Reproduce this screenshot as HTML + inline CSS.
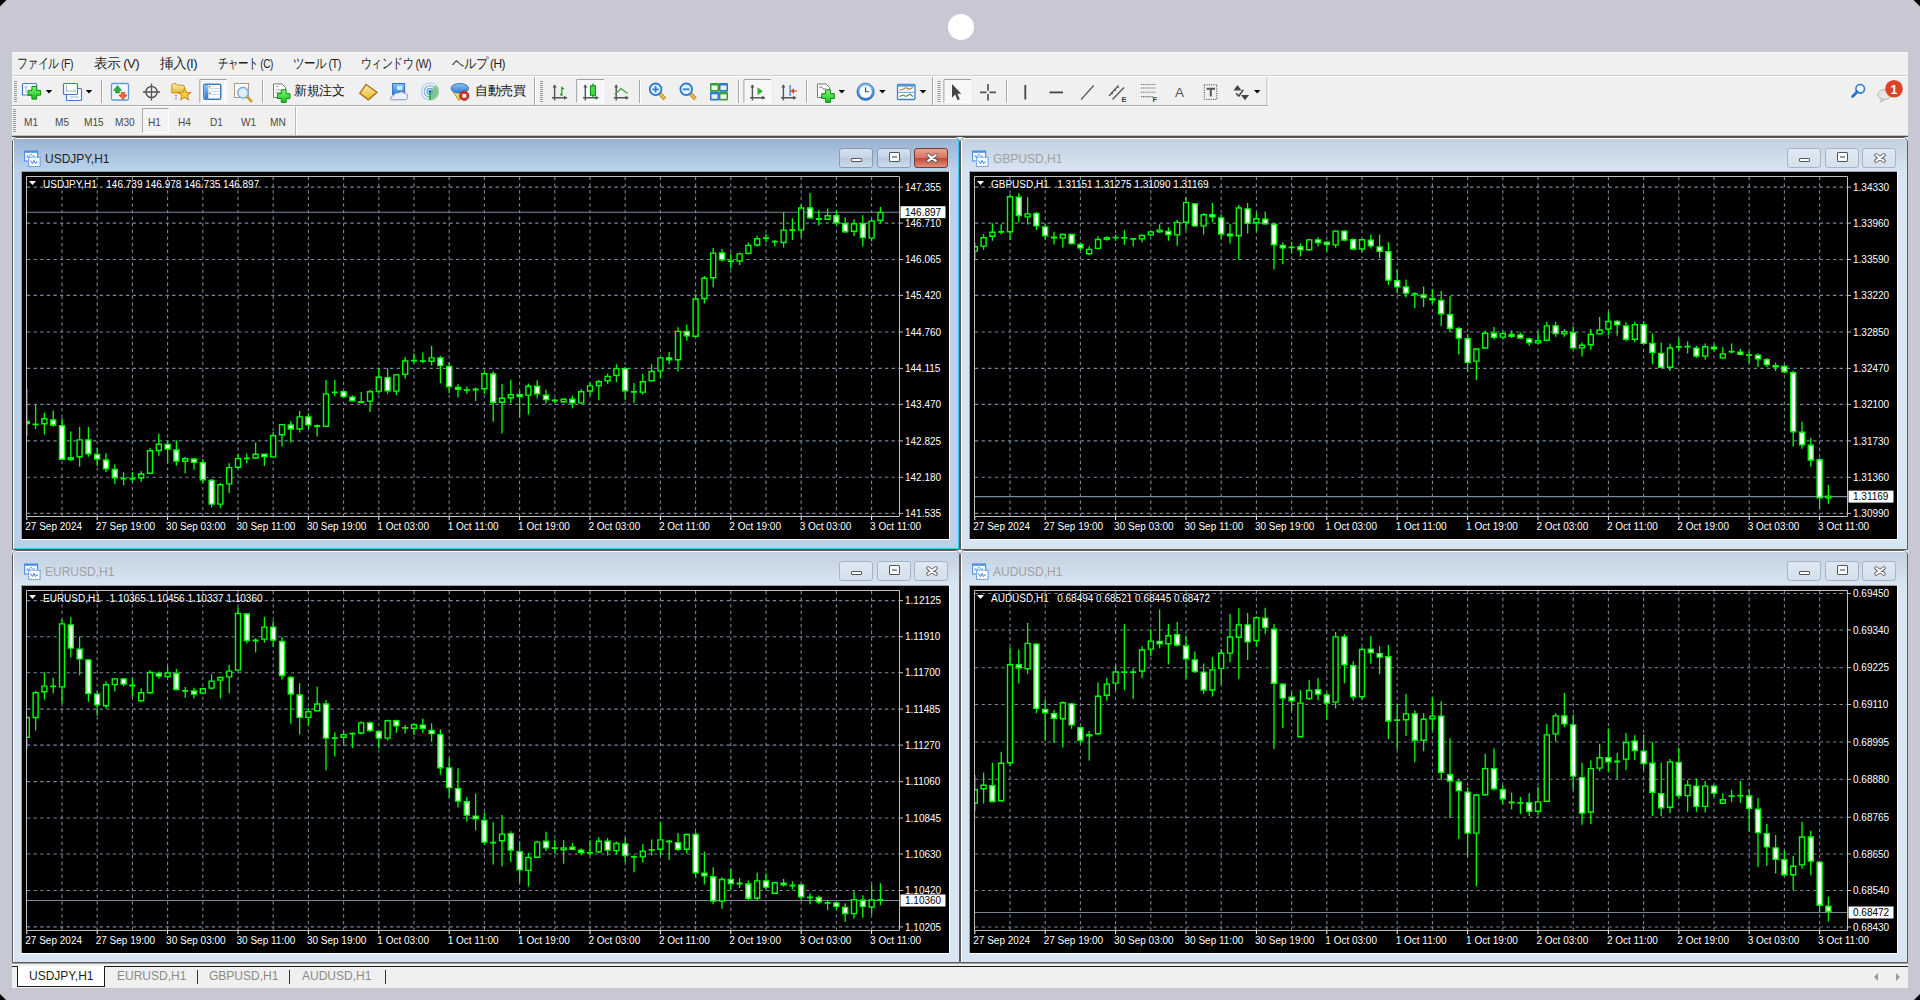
<!DOCTYPE html><html><head><meta charset="utf-8"><style>
*{margin:0;padding:0;box-sizing:border-box}
html,body{width:1920px;height:1000px;overflow:hidden;background:#c8c8d4;font-family:"Liberation Sans",sans-serif}
.a{position:absolute}
.menu span{position:absolute;top:3px;font-size:13.5px;color:#1e1e1e;white-space:nowrap;letter-spacing:-0.6px}
.tf span{position:absolute;font-size:11px;color:#4a4a4a;top:10px;white-space:nowrap;transform:scaleX(0.92);transform-origin:0 0}
svg text{font-family:"Liberation Sans",sans-serif}
.tab{position:absolute;top:0;font-size:12px;color:#8a8a8a;white-space:nowrap}
</style></head><body>
<svg class="a" style="left:0;top:0" width="1920" height="1000">
<polygon points="0,0 6.5,0 0,6.5" fill="#000"/><polygon points="1920,0 1913.5,0 1920,6.5" fill="#000"/>
<polygon points="0,1000 6,1000 0,994" fill="#000"/><polygon points="1920,1000 1914,1000 1920,994" fill="#000"/>
<circle cx="961" cy="27" r="13" fill="#fff"/>
</svg>

<div class="a" style="left:12px;top:52px;width:1896px;height:936px;background:#f0f0f0;overflow:hidden">
<div class="menu">
<span style="left:5px;transform:scaleX(0.7753);transform-origin:0 0">ファイル (F)</span>
<span style="left:82px;transform:scaleX(0.9746);transform-origin:0 0">表示 (V)</span>
<span style="left:148px;transform:scaleX(0.979);transform-origin:0 0">挿入(I)</span>
<span style="left:206px;transform:scaleX(0.7462);transform-origin:0 0">チャート (C)</span>
<span style="left:281px;transform:scaleX(0.8172);transform-origin:0 0">ツール (T)</span>
<span style="left:349px;transform:scaleX(0.7765);transform-origin:0 0">ウィンドウ (W)</span>
<span style="left:440px;transform:scaleX(0.8794);transform-origin:0 0">ヘルプ (H)</span>
</div>
<div class="a" style="left:0px;top:0px;width:1896px;height:1px;background:#f8f8f8"></div>
<div class="a" style="left:0px;top:23px;width:1896px;height:1px;background:#d0d0d0"></div>
<div class="a" style="left:0px;top:24px;width:1896px;height:1px;background:#ffffff"></div>
<div class="a" style="left:0px;top:53px;width:1256px;height:1px;background:#a8a8a8"></div>
<div class="a" style="left:0px;top:54px;width:1256px;height:1px;background:#ffffff"></div>
<div class="a" style="left:0px;top:83px;width:1896px;height:1px;background:#c0c0c0"></div>
<div class="a" style="left:0px;top:84px;width:1896px;height:1px;background:#4a4a4a"></div>
<div class="a" style="left:130px;top:56px;width:27px;height:25px;border:1px solid #a8a8a8;border-right-color:#fff;border-bottom-color:#fff;background:#f4f4f4"></div>
<div class="tf" style="position:absolute;left:0;top:54px">
<span style="left:12px">M1</span>
<span style="left:43px">M5</span>
<span style="left:72px">M15</span>
<span style="left:103px">M30</span>
<span style="left:136px">H1</span>
<span style="left:166px">H4</span>
<span style="left:198px">D1</span>
<span style="left:229px">W1</span>
<span style="left:258px">MN</span>
</div>
<div class="a" style="left:283px;top:55px;width:1px;height:28px;background:#b8b8b8"></div>
<div class="a" style="left:284px;top:55px;width:1px;height:28px;background:#ffffff"></div>
<svg class="a" style="left:0;top:0" width="1896" height="84"><defs><linearGradient id="gplus" x1="0" y1="0" x2="0" y2="1"><stop offset="0" stop-color="#7cf87c"/><stop offset="1" stop-color="#18c018"/></linearGradient><linearGradient id="gold" x1="0" y1="0" x2="0" y2="1"><stop offset="0" stop-color="#fdf0a8"/><stop offset="1" stop-color="#e4b830"/></linearGradient><linearGradient id="blu" x1="0" y1="0" x2="0" y2="1"><stop offset="0" stop-color="#8cc8f4"/><stop offset="1" stop-color="#2a78d0"/></linearGradient></defs><g transform="translate(-12,-52)"><rect x="14" y="81" width="3" height="1" fill="#9a9a9a"/><rect x="14" y="83" width="3" height="1" fill="#9a9a9a"/><rect x="14" y="85" width="3" height="1" fill="#9a9a9a"/><rect x="14" y="87" width="3" height="1" fill="#9a9a9a"/><rect x="14" y="89" width="3" height="1" fill="#9a9a9a"/><rect x="14" y="91" width="3" height="1" fill="#9a9a9a"/><rect x="14" y="93" width="3" height="1" fill="#9a9a9a"/><rect x="14" y="95" width="3" height="1" fill="#9a9a9a"/><rect x="14" y="97" width="3" height="1" fill="#9a9a9a"/><rect x="14" y="99" width="3" height="1" fill="#9a9a9a"/><rect x="14" y="101" width="3" height="1" fill="#9a9a9a"/><rect x="22.5" y="83.5" width="14" height="11.5" rx="1" fill="#fff" stroke="#3b7dc8" stroke-width="1.2"/><path d="M26 86v7M24.5 87.5l1.5-1.5 1.5 1.5" stroke="#9ab8d8" fill="none"/><polygon points="31.9,86.5 36.7,86.5 36.7,90.4 40.6,90.4 40.6,95.2 36.7,95.2 36.7,99.1 31.9,99.1 31.9,95.2 28.0,95.2 28.0,90.4 31.9,90.4" fill="url(#gplus)" stroke="#0e8a0e" stroke-width="1"/><polygon points="45.8,89.95 52.2,89.95 49,93.55" fill="#000"/><rect x="66.5" y="88.5" width="15" height="12" rx="1" fill="#fff" stroke="#3b7dc8" stroke-width="1.2"/><path d="M70 97h9" stroke="#9ab8d8"/><rect x="63.5" y="83.5" width="14" height="11" rx="1" fill="#fff" stroke="#3b7dc8" stroke-width="1.2"/><path d="M66.5 85.5v6.5M66.5 91h9M74 89.5l1.5 1.5-1.5 1.5" stroke="#9ab8d8" fill="none"/><polygon points="85.8,89.95 92.2,89.95 89,93.55" fill="#000"/><rect x="101" y="80" width="1" height="23" fill="#a8a8a8"/><rect x="102" y="80" width="1" height="23" fill="#fff"/><rect x="111.5" y="83.5" width="17" height="16.5" rx="1.5" fill="#f6f9fd" stroke="#5b9bd8" stroke-width="1.3"/><path d="M113 88h13M113 92h13M113 96h13" stroke="#e4ecf4"/><polygon points="113.5,90.5 117.5,85.5 121.5,90.5 119.3,90.5 119.3,93 115.7,93 115.7,90.5" fill="#2cae3c" stroke="#1a7a28" stroke-width=".6"/><polygon points="119,95 121.2,95 121.2,92.5 124.8,92.5 124.8,95 127,95 123,99.5" fill="#f06a30" stroke="#c02a10" stroke-width=".6"/><circle cx="151.5" cy="92" r="5.6" fill="none" stroke="#555" stroke-width="1.5"/><path d="M143 92H160M151.5 83.5V100.5" stroke="#555" stroke-width="1.3"/><path d="M171.8 85.5q0-1.8 1.8-1.8h2.5l1.5 1.5h5q1.8 0 1.8 1.8V93H171.8z" fill="url(#gold)" stroke="#c8901c" stroke-width="1"/><path d="M176 95v5" stroke="#333" stroke-dasharray="1 1.2"/><polygon points="184.6,88.3 186.4,92.3 190.6,92.6 187.4,95.3 188.4,99.6 184.6,97.3 180.8,99.6 181.8,95.3 178.6,92.6 182.8,92.3" fill="#f4d040" stroke="#d08a20" stroke-width="1.1"/><rect x="199.3" y="79" width="27.19999999999999" height="23.700000000000003" fill="#f7f7f7"/><path d="M199.8 102.7 V79.5 H226.5" stroke="#a0a0a0" fill="none"/><path d="M200.3 102.2 H226.0 V80" stroke="#fff" fill="none"/><rect x="203.8" y="84.3" width="17" height="15" rx="1.5" fill="#fff" stroke="#3a7cc8" stroke-width="1.5"/><rect x="204.5" y="85" width="3.8" height="13.6" fill="url(#blu)"/><path d="M209.5 88.5H220M209.5 91.5H220M209.5 94.5H220" stroke="#c8dcf0"/><circle cx="209.7" cy="86.8" r=".8" fill="#d03020"/><circle cx="209.7" cy="93.3" r=".8" fill="#d03020"/><rect x="234.5" y="83.5" width="14" height="14" fill="#fff" stroke="#b09880"/><circle cx="243" cy="92.7" r="5.3" fill="#d8ecf8" fill-opacity=".85" stroke="#78b0e0" stroke-width="1.6"/><path d="M247 96.8l5 5" stroke="#d8962c" stroke-width="2.6"/><rect x="262" y="80" width="1" height="23" fill="#a8a8a8"/><rect x="263" y="80" width="1" height="23" fill="#fff"/><path d="M273.5 84H282L285.5 87.5V97.5H273.5Z" fill="#fff" stroke="#777"/><path d="M275.5 86.5h3M275.5 90h7M275.5 92.5h6" stroke="#aaa"/><polygon points="281.3,89.8 286.1,89.8 286.1,93.7 290.0,93.7 290.0,98.5 286.1,98.5 286.1,102.4 281.3,102.4 281.3,98.5 277.4,98.5 277.4,93.7 281.3,93.7" fill="url(#gplus)" stroke="#0e8a0e" stroke-width="1"/><polygon points="359.8,93.4 366,84.4 377,92.2 368.4,99.8" fill="url(#gold)" stroke="#b07020" stroke-width="1.4"/><rect x="392.6" y="83.5" width="12" height="11" fill="url(#blu)" stroke="#2a70c0"/><rect x="397" y="86" width="5.5" height="4" fill="#c8ecff"/><path d="M391 99.8q-1.5-3.5 2.5-4 1-3.5 5-2.8 2.5-2.5 5.5 0 4 0 3.3 3.6 1 2.5-1.3 3.2z" fill="#eef2f8" stroke="#8898b0"/><circle cx="430" cy="91.4" r="8.6" fill="#f4f8fc" stroke="#b4cce4" stroke-width="1.2"/><circle cx="430" cy="91.4" r="5.8" fill="none" stroke="#8cb4dc" stroke-width="1.4"/><circle cx="430" cy="91.4" r="3" fill="none" stroke="#6aa0d8" stroke-width="1.2"/><path d="M430 91.4V100A8.6 8.6 0 0 0 438.6 91.4 8.6 8.6 0 0 0 436 85.3Z" fill="#6cc070" fill-opacity=".75"/><path d="M430 91.4V100" stroke="#20a030" stroke-width="1.5"/><circle cx="430" cy="91.4" r="1.6" fill="#2a70c0"/><polygon points="452,90.5 467,90.5 459,100.5" fill="url(#gold)" stroke="#c09030"/><ellipse cx="459.8" cy="88.3" rx="8.8" ry="4.8" fill="url(#blu)" stroke="#3a78c0"/><circle cx="464.3" cy="95.8" r="4.6" fill="#d83020" stroke="#a82010" stroke-width=".8"/><rect x="462.4" y="93.9" width="3.8" height="3.8" fill="#fff"/><rect x="534" y="77" width="1" height="28" fill="#a8a8a8"/><rect x="535" y="77" width="1" height="28" fill="#fff"/><rect x="540" y="81" width="3" height="1" fill="#9a9a9a"/><rect x="540" y="83" width="3" height="1" fill="#9a9a9a"/><rect x="540" y="85" width="3" height="1" fill="#9a9a9a"/><rect x="540" y="87" width="3" height="1" fill="#9a9a9a"/><rect x="540" y="89" width="3" height="1" fill="#9a9a9a"/><rect x="540" y="91" width="3" height="1" fill="#9a9a9a"/><rect x="540" y="93" width="3" height="1" fill="#9a9a9a"/><rect x="540" y="95" width="3" height="1" fill="#9a9a9a"/><rect x="540" y="97" width="3" height="1" fill="#9a9a9a"/><rect x="540" y="99" width="3" height="1" fill="#9a9a9a"/><rect x="540" y="101" width="3" height="1" fill="#9a9a9a"/><path d="M554.6 85.5V100.5M552 97.7H566.5" stroke="#555" stroke-width="1.4" fill="none"/><polygon points="552.6,87.5 554.6,84.3 556.6,87.5" fill="#555"/><polygon points="564.0,95.7 567.5,97.7 564.0,99.7" fill="#555"/><path d="M561.8 86.5V96M561.8 88.5H564M561.8 94.5H560" stroke="#20a020" stroke-width="1.3" fill="none"/><rect x="576.2" y="79" width="27.799999999999955" height="23.700000000000003" fill="#f7f7f7"/><path d="M576.7 102.7 V79.5 H604" stroke="#a0a0a0" fill="none"/><path d="M577.2 102.2 H603.5 V80" stroke="#fff" fill="none"/><path d="M585.3 85.5V100.5M583 97.7H598" stroke="#555" stroke-width="1.4" fill="none"/><polygon points="583.3,87.5 585.3,84.3 587.3,87.5" fill="#555"/><polygon points="595.5,95.7 599,97.7 595.5,99.7" fill="#555"/><path d="M593 83.5V98" stroke="#108010" stroke-width="1.2"/><rect x="590.5" y="85.8" width="5" height="9.5" fill="#44dd44" stroke="#108a10"/><path d="M616.2 85.5V100.5M613.8 97.7H628" stroke="#555" stroke-width="1.4" fill="none"/><polygon points="614.2,87.5 616.2,84.3 618.2,87.5" fill="#555"/><polygon points="625.5,95.7 629,97.7 625.5,99.7" fill="#555"/><polyline points="615,94.5 621,88.5 627.5,93.5" fill="none" stroke="#40a040" stroke-width="1.3"/><rect x="639" y="80" width="1" height="23" fill="#a8a8a8"/><rect x="640" y="80" width="1" height="23" fill="#fff"/><path d="M659.8000000000001 93.5l5 5.5" stroke="#a8781c" stroke-width="3.6"/><path d="M659.8000000000001 93.5l5 5.5" stroke="#f0c040" stroke-width="2"/><circle cx="655.6" cy="89.3" r="5.8" fill="#dff4fd" stroke="#2a78d0" stroke-width="1.8"/><path d="M652.3000000000001 89.3H658.9M655.6 86V92.6" stroke="#3a80c8" stroke-width="1.8"/><path d="M690.4000000000001 93.5l5 5.5" stroke="#a8781c" stroke-width="3.6"/><path d="M690.4000000000001 93.5l5 5.5" stroke="#f0c040" stroke-width="2"/><circle cx="686.2" cy="89.3" r="5.8" fill="#dff4fd" stroke="#2a78d0" stroke-width="1.8"/><path d="M682.9000000000001 89.3H689.5" stroke="#3a80c8" stroke-width="1.8"/><rect x="710" y="83" width="9" height="8.8" rx="1" fill="#38a038"/><rect x="719" y="83" width="9" height="8.8" rx="1" fill="#2c78d0"/><rect x="710" y="91.8" width="9" height="8.8" rx="1" fill="#2c78d0"/><rect x="719" y="91.8" width="9" height="8.8" rx="1" fill="#38a038"/><rect x="711.5" y="85.5" width="6" height="4.5" fill="#f4f8e8"/><rect x="720.5" y="85.5" width="6" height="4.5" fill="#e8f0fc"/><rect x="711.5" y="94.3" width="6" height="4.5" fill="#e8f0fc"/><rect x="720.5" y="94.3" width="6" height="4.5" fill="#f4f8e8"/><rect x="738" y="80" width="1" height="23" fill="#a8a8a8"/><rect x="739" y="80" width="1" height="23" fill="#fff"/><rect x="743.4" y="79" width="27.5" height="23.700000000000003" fill="#f7f7f7"/><path d="M743.9 102.7 V79.5 H770.9" stroke="#a0a0a0" fill="none"/><path d="M744.4 102.2 H770.4 V80" stroke="#fff" fill="none"/><path d="M752.4 85.5V100.5M750 97.7H764.5" stroke="#555" stroke-width="1.4" fill="none"/><polygon points="750.4,87.5 752.4,84.3 754.4,87.5" fill="#555"/><polygon points="762.0,95.7 765.5,97.7 762.0,99.7" fill="#555"/><polygon points="757.5,87.3 762.8,91.2 757.5,95.2" fill="#30b030"/><path d="M783.4 85.5V100.5M781 97.7H795.5" stroke="#555" stroke-width="1.4" fill="none"/><polygon points="781.4,87.5 783.4,84.3 785.4,87.5" fill="#555"/><polygon points="793.0,95.7 796.5,97.7 793.0,99.7" fill="#555"/><path d="M790.2 85V96" stroke="#6a9ac8" stroke-width="1.8"/><polygon points="790.5,91 794,88.3 794,93.7" fill="#d83818"/><path d="M793.5 91H797" stroke="#e06020" stroke-width="1.4"/><rect x="806" y="80" width="1" height="23" fill="#a8a8a8"/><rect x="807" y="80" width="1" height="23" fill="#fff"/><path d="M817.5 84H826L829.5 87.5V97.5H817.5Z" fill="#fff" stroke="#777"/><path d="M819.5 88q1-3 3 0t3 0" stroke="#666" fill="none"/><polygon points="825.6,89.8 830.4,89.8 830.4,93.7 834.3,93.7 834.3,98.5 830.4,98.5 830.4,102.4 825.6,102.4 825.6,98.5 821.7,98.5 821.7,93.7 825.6,93.7" fill="url(#gplus)" stroke="#0e8a0e" stroke-width="1"/><polygon points="838.5999999999999,89.95 845.0,89.95 841.8,93.55" fill="#000"/><circle cx="865.6" cy="91.75" r="8.6" fill="url(#blu)" stroke="#1a5aa8" stroke-width=".8"/><circle cx="865.6" cy="91.75" r="6.2" fill="#fafcfe"/><path d="M865.6 87.3V91.75H869" stroke="#555" stroke-width="1.2" fill="none"/><polygon points="879.1999999999999,89.95 885.6,89.95 882.4,93.55" fill="#000"/><rect x="897.5" y="84.5" width="17.5" height="15" rx="1" fill="#fff" stroke="#3a80d0" stroke-width="1.3"/><rect x="897.5" y="84.5" width="17.5" height="2.2" fill="#5a9ae0"/><path d="M898 92.3H915" stroke="#5a9ae0"/><polyline points="899.5,90.2 903,89.2 906,87.6 909,89.3 913,87.5" fill="none" stroke="#c87038" stroke-width="1.1"/><polyline points="899.5,96.5 903,95 906,96.5 910,94.2 913,96.5" fill="none" stroke="#30a040" stroke-width="1.1"/><polygon points="919.8,89.95 926.2,89.95 923,93.55" fill="#000"/><rect x="932" y="77" width="1" height="28" fill="#a8a8a8"/><rect x="933" y="77" width="1" height="28" fill="#fff"/><rect x="937.5" y="81" width="3" height="1" fill="#9a9a9a"/><rect x="937.5" y="83" width="3" height="1" fill="#9a9a9a"/><rect x="937.5" y="85" width="3" height="1" fill="#9a9a9a"/><rect x="937.5" y="87" width="3" height="1" fill="#9a9a9a"/><rect x="937.5" y="89" width="3" height="1" fill="#9a9a9a"/><rect x="937.5" y="91" width="3" height="1" fill="#9a9a9a"/><rect x="937.5" y="93" width="3" height="1" fill="#9a9a9a"/><rect x="937.5" y="95" width="3" height="1" fill="#9a9a9a"/><rect x="937.5" y="97" width="3" height="1" fill="#9a9a9a"/><rect x="937.5" y="99" width="3" height="1" fill="#9a9a9a"/><rect x="937.5" y="101" width="3" height="1" fill="#9a9a9a"/><rect x="943.4" y="79" width="27.5" height="23.700000000000003" fill="#f7f7f7"/><path d="M943.9 102.7 V79.5 H970.9" stroke="#a0a0a0" fill="none"/><path d="M944.4 102.2 H970.4 V80" stroke="#fff" fill="none"/><polygon points="952,84 952,97.7 955.2,94.6 957.6,100.2 959.8,99.2 957.4,93.7 961.3,93.7" fill="#444"/><path d="M980 92.4H986.6M989.4 92.4H996M988 84V90.8M988 94V100.5" stroke="#555" stroke-width="1.7"/><rect x="1006" y="80" width="1" height="23" fill="#a8a8a8"/><rect x="1007" y="80" width="1" height="23" fill="#fff"/><path d="M1025.3 85V99.5" stroke="#444" stroke-width="1.8"/><path d="M1049.5 92.4H1063" stroke="#444" stroke-width="1.8"/><path d="M1081 99.6L1093.7 85.5" stroke="#555" stroke-width="1.3"/><path d="M1109 96L1118.5 85.5M1112.5 99.5L1124 87.5" stroke="#555" stroke-width="1.3"/><path d="M1111 92l2 2M1114 89l2 2M1117 86l2 2" stroke="#555"/><text x="1121.5" y="101.6" font-size="7.5" font-weight="bold" fill="#444" font-family="Liberation Sans">E</text><path d="M1141 84.5H1156M1141 88H1156M1141 92.3H1156M1141 96.6H1153" stroke="#666" stroke-width="1.1" stroke-dasharray="1.2 .9"/><text x="1152.5" y="101.8" font-size="7.5" font-weight="bold" fill="#444" font-family="Liberation Sans">F</text><text x="1175" y="96.8" font-size="13.5" fill="#555" font-family="Liberation Sans">A</text><rect x="1204.3" y="84.8" width="12.5" height="14.6" fill="none" stroke="#333" stroke-dasharray="1 1.3"/><path d="M1206.6 88.7H1215M1210.8 88.7V96.6" stroke="#555" stroke-width="2"/><polygon points="1233.5,90.5 1237.5,85 1241.5,90.5" fill="#444"/><path d="M1236 93.2L1238.8 96L1243.3 89.8" stroke="#444" stroke-width="1.5" fill="none"/><polygon points="1241,95 1249,95 1245,100.2" fill="#444"/><polygon points="1254.0,89.95 1260.4,89.95 1257.2,93.55" fill="#000"/><rect x="1266.5" y="77" width="1" height="28" fill="#a8a8a8"/><rect x="1267.5" y="77" width="1" height="28" fill="#fff"/><circle cx="1860.2" cy="88.8" r="4.3" fill="#fff" stroke="#2a7ad0" stroke-width="1.6"/><path d="M1857.2 91.8L1852.6 96.4" stroke="#2a70c8" stroke-width="2.8" stroke-linecap="round"/><ellipse cx="1884.5" cy="94.5" rx="6.5" ry="5" fill="#e6e6e6" stroke="#b4b4b4"/><path d="M1882 99l-1.5 3 4-2.5" fill="#d8d8d8" stroke="#aaa" stroke-width=".8"/><circle cx="1894" cy="88.8" r="8.8" fill="#e04024"/><text x="1890.6" y="93.6" font-size="12.5" font-weight="bold" fill="#fff" font-family="Liberation Sans">1</text></g></svg><div class="a" style="left:282px;top:31px;font-size:12.5px;color:#111;letter-spacing:-0.4px;white-space:nowrap">新規注文</div><div class="a" style="left:463px;top:31px;font-size:12.5px;color:#111;letter-spacing:-0.4px;white-space:nowrap">自動売買</div>
<svg class="a" style="left:0;top:0" width="6" height="84"><rect x="1" y="57" width="3" height="1" fill="#9a9a9a"/><rect x="1" y="59" width="3" height="1" fill="#9a9a9a"/><rect x="1" y="61" width="3" height="1" fill="#9a9a9a"/><rect x="1" y="63" width="3" height="1" fill="#9a9a9a"/><rect x="1" y="65" width="3" height="1" fill="#9a9a9a"/><rect x="1" y="67" width="3" height="1" fill="#9a9a9a"/><rect x="1" y="69" width="3" height="1" fill="#9a9a9a"/><rect x="1" y="71" width="3" height="1" fill="#9a9a9a"/><rect x="1" y="73" width="3" height="1" fill="#9a9a9a"/><rect x="1" y="75" width="3" height="1" fill="#9a9a9a"/><rect x="1" y="77" width="3" height="1" fill="#9a9a9a"/><rect x="1" y="79" width="3" height="1" fill="#9a9a9a"/></svg>
</div>
<div class="a" style="left:12px;top:137px;width:948px;height:413px;background:#b9d1ea;border:1px solid #5c5c5c;border-radius:5px 5px 0 0;overflow:hidden">
<div class="a" style="left:0;top:0;width:946px;height:1px;background:#fff"></div>
<div class="a" style="left:0;top:1px;width:946px;height:33px;background:linear-gradient(#98b3d3,#bdd4ec)"></div>
<div class="a" style="left:945px;top:0;width:1px;height:413px;background:#3cc8f0"></div>
<div class="a" style="left:0;top:410px;width:948px;height:1px;background:#3cc8f0"></div>
<div class="a" style="left:0;top:1px;width:1px;height:413px;background:#fff"></div>
<svg class="a" style="left:11px;top:12px" width="17" height="17" viewBox="0 0 17 17"><rect x="0.6" y="1" width="13" height="10" fill="#fff" stroke="#4a8ee8" stroke-width="1.1"/><rect x="0.6" y="1" width="13" height="1.8" fill="#4a8ee8"/><path d="M3 8V5.5l2 1.5 2-3 2 2.5 2-1" stroke="#6aa4ec" fill="none" stroke-width="1"/><rect x="4.6" y="7.3" width="11.5" height="9.2" fill="#fff" stroke="#4a8ee8" stroke-width="1.1" stroke-dasharray="1.4 .5"/><path d="M6.5 10.5l2 3 1.5-3 1.5 3 1.2-1.8 1 1" stroke="#3a80e0" fill="none" stroke-width="1"/></svg>
<div class="a" style="left:32px;top:14px;font-size:12px;color:#1e1e1e;white-space:nowrap">USDJPY,H1</div>
<div class="a" style="left:826px;top:10px;width:34px;height:20px;border:1px solid #8c9bb0;border-radius:3px;background:linear-gradient(#d4e0ee,#c4d4e6 50%,#b8cade 51%,#d0dcea)">
<div class="a" style="left:11px;top:9px;width:11px;height:4px;background:#fff;border:1px solid #555;border-radius:1px"></div>
</div>
<div class="a" style="left:864px;top:10px;width:34px;height:20px;border:1px solid #8c9bb0;border-radius:3px;background:linear-gradient(#d4e0ee,#c4d4e6 50%,#b8cade 51%,#d0dcea)">
<div class="a" style="left:11px;top:3px;width:11px;height:10px;background:#fff;border:1px solid #555;border-radius:1px"><div class="a" style="left:2px;top:3px;width:5px;height:2px;background:#8ba0b8"></div></div>
</div>
<div class="a" style="left:901px;top:10px;width:34px;height:20px;border:1px solid #7a3a30;border-radius:3px;background:linear-gradient(#e8a498,#d87060 50%,#c04830 51%,#e09080)">
<svg class="a" style="left:10px;top:2px" width="14" height="14" viewBox="0 0 14 14"><path d="M3.2 4.2l7.6 5.6M10.8 4.2l-7.6 5.6" stroke="#555" stroke-width="3.9" stroke-linecap="round"/><path d="M3.2 4.2l7.6 5.6M10.8 4.2l-7.6 5.6" stroke="#fff" stroke-width="2.1" stroke-linecap="round"/></svg>
</div>
</div>
<svg class="a" style="left:21px;top:171px" width="929" height="369" viewBox="-1 -1 929 369"><rect x="-1" y="-1" width="929" height="369" fill="#fff"/><rect x="-1" y="-1" width="928" height="368" fill="#a0a0a0"/><rect x="0" y="0" width="927" height="367" fill="#000"/><path d="M5 15.1H877M5 51.1H877M5 87.5H877M5 123.4H877M5 160.0H877M5 196.4H877M5 232.4H877M5 268.9H877M5 305.3H877M5 341.4H877M40.0 5V344M75.2 5V344M110.4 5V344M145.6 5V344M180.8 5V344M216.0 5V344M251.2 5V344M286.4 5V344M321.6 5V344M356.8 5V344M392.0 5V344M427.2 5V344M462.4 5V344M497.6 5V344M532.8 5V344M568.0 5V344M603.2 5V344M638.4 5V344M673.6 5V344M708.8 5V344M744.0 5V344M779.2 5V344M814.4 5V344M849.6 5V344" stroke="#778899" stroke-width="1.1" stroke-dasharray="3.3 3.3" fill="none"/><path d="M4 40.19999999999999H877" stroke="#778899" stroke-width="1.1"/><svg x="4.5" y="4.5" width="872" height="339" viewBox="4.5 4.5 872 339" overflow="hidden"><path d="M4.8 216.7V264.0M13.6 232.5V257.2M22.4 240.7V262.5M31.2 238.5V254.7M40.0 246.3V288.0M48.8 259.5V288.7M57.6 255.0V294.7M66.4 255.0V284.7M75.2 275.7V294.0M84.0 281.2V300.0M92.8 292.5V312.0M101.6 300.3V313.2M110.4 300.3V309.7M119.2 299.2V309.7M128.0 276.0V302.2M136.8 261.7V283.8M145.6 268.5V291.0M154.4 268.5V293.7M163.2 285.0V301.2M172.0 286.5V297.7M180.8 287.2V311.0M189.6 307.0V335.3M198.4 311.0V336.2M207.2 291.2V320.9M216.0 281.8V296.9M224.8 281.5V291.5M233.6 270.5V286.7M242.4 281.8V293.9M251.2 259.7V285.8M260.0 252.0V274.6M268.8 248.9V270.5M277.6 239.0V260.6M286.4 241.2V256.6M295.2 252.5V264.6M304.0 208.0V254.8M312.8 208.0V224.2M321.6 218.8V226.0M330.4 223.2V229.6M339.2 220.1V230.9M348.0 217.8V239.9M356.8 197.0V221.8M365.6 196.2V221.8M374.4 202.0V223.2M383.2 184.9V206.5M392.0 181.3V191.2M400.8 180.4V191.2M409.6 174.1V193.4M418.4 184.0V211.0M427.2 190.3V220.9M436.0 211.9V225.4M444.8 214.6V221.8M453.6 215.5V229.0M462.4 199.3V221.8M471.2 199.3V249.7M480.0 211.9V261.4M488.8 207.8V230.8M497.6 219.1V245.2M506.4 211.4V242.5M515.2 208.3V226.3M524.0 217.8V231.7M532.8 226.4V230.9M541.6 226.4V230.9M550.4 223.7V236.3M559.2 217.0V231.8M568.0 210.2V223.7M576.8 208.0V228.2M585.6 201.5V212.0M594.4 192.2V210.2M603.2 194.9V228.2M612.0 211.1V230.9M620.8 202.1V222.8M629.6 192.2V209.3M638.4 185.0V206.6M647.2 180.0V192.2M656.0 155.3V199.4M664.8 152.6V168.8M673.6 122.0V165.2M682.4 104.0V131.4M691.2 76.1V115.2M700.0 76.9V89.5M708.8 81.4V96.7M717.6 80.5V93.1M726.4 70.6V82.3M735.2 63.8V74.6M744.0 62.0V70.2M752.8 67.9V74.6M761.6 40.0V75.6M770.4 46.3V67.9M779.2 31.9V65.6M788.0 21.1V46.8M796.8 38.2V53.5M805.6 36.4V48.1M814.4 38.2V53.5M823.2 45.4V60.7M832.0 47.2V64.3M840.8 43.2V74.6M849.6 46.8V69.2M858.4 35.0V51.2" stroke="#00ff00" stroke-width="1.3" fill="none"/><path d="M19.9 246.8H24.9V251.8H19.9ZM46.3 285.8H51.3V287.5H46.3ZM55.1 267.9H60.1V284.8H55.1ZM116.7 302.0H121.7V305.8H116.7ZM125.5 278.7H130.5V301.3H125.5ZM134.3 272.3H139.3V278.5H134.3ZM160.7 286.7H165.7V289.3H160.7ZM195.9 312.7H200.9V332.1H195.9ZM204.7 295.6H209.7V311.9H204.7ZM213.5 286.6H218.5V295.2H213.5ZM231.1 282.3H236.1V286.0H231.1ZM248.7 263.8H253.7V284.9H248.7ZM257.5 252.6H262.5V262.8H257.5ZM275.1 244.9H280.1V257.0H275.1ZM301.5 221.9H306.5V254.2H301.5ZM345.5 219.7H350.5V229.1H345.5ZM354.3 205.2H359.3V219.1H354.3ZM371.9 202.9H376.9V219.1H371.9ZM380.7 189.0H385.7V202.4H380.7ZM407.1 185.9H412.1V189.3H407.1ZM459.9 201.8H464.9V216.8H459.9ZM477.5 226.3H482.5V230.3H477.5ZM486.3 222.7H491.3V225.8H486.3ZM503.9 214.2H508.9V223.1H503.9ZM539.1 227.2H544.1V229.8H539.1ZM556.7 219.7H561.7V230.9H556.7ZM565.5 213.9H570.5V219.0H565.5ZM574.3 209.8H579.3V213.6H574.3ZM583.1 204.4H588.1V208.8H583.1ZM591.9 196.6H596.9V203.4H591.9ZM618.3 209.8H623.3V220.1H618.3ZM627.1 199.5H632.1V208.8H627.1ZM635.9 185.9H640.9V198.9H635.9ZM653.5 159.4H658.5V187.7H653.5ZM671.1 127.0H676.1V164.3H671.1ZM679.9 106.3H684.9V126.5H679.9ZM688.7 81.1H693.7V105.7H688.7ZM715.1 81.9H720.1V89.0H715.1ZM723.9 73.4H728.9V81.3H723.9ZM732.7 66.8H737.7V73.0H732.7ZM759.1 58.1H764.1V70.5H759.1ZM776.7 36.0H781.7V57.9H776.7ZM803.1 43.7H808.1V47.2H803.1ZM829.5 51.7H834.5V59.3H829.5ZM847.1 49.1H852.1V66.1H847.1ZM855.9 40.5H860.9V48.5H855.9Z" stroke="#00ff00" stroke-width="1.4" fill="#000"/><path d="M2.3 249.5H7.3V251.5H2.3ZM28.7 248.0H33.7V253.0H28.7ZM37.5 253.7H42.5V287.2H37.5ZM63.9 267.9H68.9V281.8H63.9ZM72.7 282.5H77.7V287.0H72.7ZM81.5 288.0H86.5V296.8H81.5ZM90.3 297.5H95.3V305.8H90.3ZM143.1 272.4H148.1V277.0H143.1ZM151.9 278.0H156.9V289.0H151.9ZM169.5 287.0H174.5V290.2H169.5ZM178.3 290.8H183.3V307.8H178.3ZM187.1 308.4H192.1V332.1H187.1ZM239.9 282.3H244.9V284.6H239.9ZM266.3 253.0H271.3V257.0H266.3ZM283.9 244.9H288.9V252.9H283.9ZM319.1 219.7H324.1V224.5H319.1ZM327.9 225.1H332.9V228.8H327.9ZM363.1 205.7H368.1V218.8H363.1ZM415.9 185.9H420.9V193.6H415.9ZM424.7 194.4H429.7V214.5H424.7ZM433.5 215.5H438.5V217.3H433.5ZM468.7 202.0H473.7V230.3H468.7ZM495.1 222.7H500.1V224.5H495.1ZM512.7 214.2H517.7V221.8H512.7ZM521.5 223.2H526.5V227.6H521.5ZM547.9 227.2H552.9V230.9H547.9ZM600.7 196.6H605.7V218.7H600.7ZM644.7 185.9H649.7V187.7H644.7ZM662.3 159.4H667.3V163.8H662.3ZM697.5 81.0H702.5V87.7H697.5ZM785.5 36.0H790.5V45.8H785.5ZM811.9 43.7H816.9V50.7H811.9ZM820.7 51.7H825.7V59.7H820.7ZM838.3 51.7H843.3V65.6H838.3Z" stroke="#00ff00" stroke-width="1.4" fill="#fff"/><path d="M10.6 252.4H16.6M98.6 306.7H104.6M107.4 306.6H113.4M221.8 286.4H227.8M292.2 254.0H298.2M309.8 220.3H315.8M336.2 230.0H342.2M389.0 188.7H395.0M397.8 189.2H403.8M441.8 218.2H447.8M450.6 217.5H456.6M529.8 228.5H535.8M609.0 219.9H615.0M705.8 89.1H711.8M741.0 66.1H747.0M749.8 69.7H755.8M767.4 58.2H773.4M793.8 47.0H799.8" stroke="#00ff00" stroke-width="1.8" fill="none"/></svg><path d="M4.5 344.5V4.5H877.5V344.5Z" stroke="#c0c0c0" stroke-width="1" fill="none"/><path d="M878 15.1H881" stroke="#c0c0c0"/><text x="883" y="18.7" font-size="10" fill="#fff">147.355</text><path d="M878 51.1H881" stroke="#c0c0c0"/><text x="883" y="54.7" font-size="10" fill="#fff">146.710</text><path d="M878 87.5H881" stroke="#c0c0c0"/><text x="883" y="91.1" font-size="10" fill="#fff">146.065</text><path d="M878 123.4H881" stroke="#c0c0c0"/><text x="883" y="127.0" font-size="10" fill="#fff">145.420</text><path d="M878 160.0H881" stroke="#c0c0c0"/><text x="883" y="163.6" font-size="10" fill="#fff">144.760</text><path d="M878 196.4H881" stroke="#c0c0c0"/><text x="883" y="200.0" font-size="10" fill="#fff">144.115</text><path d="M878 232.4H881" stroke="#c0c0c0"/><text x="883" y="236.0" font-size="10" fill="#fff">143.470</text><path d="M878 268.9H881" stroke="#c0c0c0"/><text x="883" y="272.5" font-size="10" fill="#fff">142.825</text><path d="M878 305.3H881" stroke="#c0c0c0"/><text x="883" y="308.9" font-size="10" fill="#fff">142.180</text><path d="M878 341.4H881" stroke="#c0c0c0"/><text x="883" y="345.0" font-size="10" fill="#fff">141.535</text><rect x="878.5" y="34.19999999999999" width="45" height="12" fill="#fff"/><text x="883" y="43.8" font-size="10" fill="#000">146.897</text><path d="M4.8 345V348" stroke="#fff"/><text x="3.3" y="357.5" font-size="10" fill="#fff">27 Sep 2024</text><path d="M75.2 345V348" stroke="#fff"/><text x="73.7" y="357.5" font-size="10" fill="#fff">27 Sep 19:00</text><path d="M145.6 345V348" stroke="#fff"/><text x="144.1" y="357.5" font-size="10" fill="#fff">30 Sep 03:00</text><path d="M216.0 345V348" stroke="#fff"/><text x="214.5" y="357.5" font-size="10" fill="#fff">30 Sep 11:00</text><path d="M286.4 345V348" stroke="#fff"/><text x="284.9" y="357.5" font-size="10" fill="#fff">30 Sep 19:00</text><path d="M356.8 345V348" stroke="#fff"/><text x="355.3" y="357.5" font-size="10" fill="#fff">1 Oct 03:00</text><path d="M427.2 345V348" stroke="#fff"/><text x="425.7" y="357.5" font-size="10" fill="#fff">1 Oct 11:00</text><path d="M497.6 345V348" stroke="#fff"/><text x="496.1" y="357.5" font-size="10" fill="#fff">1 Oct 19:00</text><path d="M568.0 345V348" stroke="#fff"/><text x="566.5" y="357.5" font-size="10" fill="#fff">2 Oct 03:00</text><path d="M638.4 345V348" stroke="#fff"/><text x="636.9" y="357.5" font-size="10" fill="#fff">2 Oct 11:00</text><path d="M708.8 345V348" stroke="#fff"/><text x="707.3" y="357.5" font-size="10" fill="#fff">2 Oct 19:00</text><path d="M779.2 345V348" stroke="#fff"/><text x="777.7" y="357.5" font-size="10" fill="#fff">3 Oct 03:00</text><path d="M849.6 345V348" stroke="#fff"/><text x="848.1" y="357.5" font-size="10" fill="#fff">3 Oct 11:00</text><path d="M7 9h7l-3.5 4z" fill="#fff"/><text x="21" y="16" font-size="10" fill="#fff">USDJPY,H1</text><text x="84.3" y="16" font-size="10" fill="#fff">146.739 146.978 146.735 146.897</text></svg>
<div class="a" style="left:960px;top:137px;width:948px;height:413px;background:#d7e4f2;border:1px solid #5c5c5c;border-radius:5px 5px 0 0;overflow:hidden">
<div class="a" style="left:0;top:0;width:946px;height:1px;background:#fff"></div>
<div class="a" style="left:0;top:1px;width:946px;height:33px;background:linear-gradient(#c3d1e0,#d8e5f2)"></div>
<div class="a" style="left:0;top:1px;width:1px;height:413px;background:#fff"></div>
<svg class="a" style="left:11px;top:12px" width="17" height="17" viewBox="0 0 17 17"><rect x="0.6" y="1" width="13" height="10" fill="#fff" stroke="#4a8ee8" stroke-width="1.1"/><rect x="0.6" y="1" width="13" height="1.8" fill="#4a8ee8"/><path d="M3 8V5.5l2 1.5 2-3 2 2.5 2-1" stroke="#6aa4ec" fill="none" stroke-width="1"/><rect x="4.6" y="7.3" width="11.5" height="9.2" fill="#fff" stroke="#4a8ee8" stroke-width="1.1" stroke-dasharray="1.4 .5"/><path d="M6.5 10.5l2 3 1.5-3 1.5 3 1.2-1.8 1 1" stroke="#3a80e0" fill="none" stroke-width="1"/></svg>
<div class="a" style="left:32px;top:14px;font-size:12px;color:#a0a0a0;white-space:nowrap">GBPUSD,H1</div>
<div class="a" style="left:826px;top:10px;width:34px;height:20px;border:1px solid #a8b4c4;border-radius:3px;background:linear-gradient(#dfe8f2,#d4e0ec)">
<div class="a" style="left:11px;top:9px;width:11px;height:4px;background:#fff;border:1px solid #555;border-radius:1px"></div>
</div>
<div class="a" style="left:864px;top:10px;width:34px;height:20px;border:1px solid #a8b4c4;border-radius:3px;background:linear-gradient(#dfe8f2,#d4e0ec)">
<div class="a" style="left:11px;top:3px;width:11px;height:10px;background:#fff;border:1px solid #555;border-radius:1px"><div class="a" style="left:2px;top:3px;width:5px;height:2px;background:#8ba0b8"></div></div>
</div>
<div class="a" style="left:901px;top:10px;width:34px;height:20px;border:1px solid #a8b4c4;border-radius:3px;background:linear-gradient(#dfe8f2,#d4e0ec)">
<svg class="a" style="left:10px;top:2px" width="14" height="14" viewBox="0 0 14 14"><path d="M3.2 4.2l7.6 5.6M10.8 4.2l-7.6 5.6" stroke="#555" stroke-width="3.9" stroke-linecap="round"/><path d="M3.2 4.2l7.6 5.6M10.8 4.2l-7.6 5.6" stroke="#fff" stroke-width="2.1" stroke-linecap="round"/></svg>
</div>
</div>
<svg class="a" style="left:969px;top:171px" width="929" height="369" viewBox="-1 -1 929 369"><rect x="-1" y="-1" width="929" height="369" fill="#fff"/><rect x="-1" y="-1" width="928" height="368" fill="#a0a0a0"/><rect x="0" y="0" width="927" height="367" fill="#000"/><path d="M5 15.1H877M5 51.1H877M5 87.5H877M5 123.4H877M5 160.0H877M5 196.4H877M5 232.4H877M5 268.9H877M5 305.3H877M5 341.4H877M40.0 5V344M75.2 5V344M110.4 5V344M145.6 5V344M180.8 5V344M216.0 5V344M251.2 5V344M286.4 5V344M321.6 5V344M356.8 5V344M392.0 5V344M427.2 5V344M462.4 5V344M497.6 5V344M532.8 5V344M568.0 5V344M603.2 5V344M638.4 5V344M673.6 5V344M708.8 5V344M744.0 5V344M779.2 5V344M814.4 5V344M849.6 5V344" stroke="#778899" stroke-width="1.1" stroke-dasharray="3.3 3.3" fill="none"/><path d="M4 324.6H877" stroke="#778899" stroke-width="1.1"/><svg x="4.5" y="4.5" width="872" height="339" viewBox="4.5 4.5 872 339" overflow="hidden"><path d="M4.8 70.6V87.7M13.6 62.0V77.8M22.4 51.2V68.8M31.2 52.2V62.5M40.0 22.0V67.9M48.8 21.1V50.4M57.6 25.2V52.6M66.4 40.0V58.0M75.2 52.6V67.4M84.0 59.8V72.4M92.8 61.6V75.6M101.6 62.0V72.4M110.4 70.6V78.2M119.2 74.2V82.8M128.0 64.3V77.4M136.8 64.3V68.8M145.6 62.5V68.8M154.4 58.0V72.8M163.2 66.1V74.6M172.0 62.5V70.2M180.8 58.9V64.3M189.6 52.2V60.7M198.4 55.3V68.8M207.2 48.1V73.8M216.0 25.2V58.0M224.8 31.0V54.4M233.6 40.9V62.5M242.4 31.0V49.9M251.2 42.2V67.0M260.0 51.7V71.5M268.8 32.8V87.7M277.6 31.0V61.6M286.4 40.9V58.9M295.2 39.6V52.6M304.0 51.2V97.6M312.8 70.6V92.2M321.6 69.7V81.4M330.4 71.5V84.6M339.2 67.0V78.7M348.0 65.2V74.6M356.8 69.4V79.3M365.6 58.2V75.7M374.4 58.2V69.0M383.2 66.2V78.0M392.0 66.7V80.2M400.8 62.6V76.6M409.6 62.6V86.0M418.4 70.3V113.0M427.2 97.3V121.2M436.0 107.6V125.2M444.8 120.2V136.0M453.6 114.4V135.1M462.4 117.1V131.5M471.2 118.9V154.0M480.0 124.3V160.3M488.8 154.9V182.4M497.6 162.1V199.9M506.4 176.5V208.0M515.2 158.5V176.5M524.0 154.9V167.5M532.8 159.3V167.4M541.6 158.4V166.0M550.4 160.2V166.5M559.2 165.6V173.7M568.0 160.2V171.9M576.8 149.8V169.2M585.6 149.8V164.7M594.4 157.0V164.7M603.2 154.4V177.3M612.0 170.6V184.5M620.8 157.0V177.8M629.6 144.9V162.4M638.4 140.0V162.9M647.2 148.0V163.8M656.0 150.3V169.2M664.8 149.8V170.1M673.6 149.0V172.4M682.4 161.6V192.2M691.2 170.6V196.2M700.0 171.4V198.9M708.8 166.1V178.7M717.6 169.2V181.4M726.4 173.8V185.9M735.2 171.5V187.7M744.0 172.4V179.2M752.8 175.1V186.8M761.6 171.5V181.4M770.4 176.9V183.2M779.2 179.2V191.3M788.0 181.4V194.9M796.8 185.9V194.9M805.6 190.4V199.0M814.4 193.1V201.2M823.2 198.5V274.6M832.0 249.8V276.8M840.8 266.0V294.8M849.6 286.1V336.2M858.4 313.1V331.7" stroke="#00ff00" stroke-width="1.3" fill="none"/><path d="M2.3 74.7H7.3V79.1H2.3ZM11.1 65.7H16.1V74.1H11.1ZM19.9 60.3H24.9V64.3H19.9ZM37.5 24.7H42.5V59.7H37.5ZM55.1 41.9H60.1V44.9H55.1ZM90.3 62.5H95.3V66.1H90.3ZM116.7 77.4H121.7V81.8H116.7ZM125.5 67.5H130.5V76.4H125.5ZM134.3 65.7H139.3V67.4H134.3ZM169.5 63.5H174.5V66.9H169.5ZM178.3 59.9H183.3V62.9H178.3ZM187.1 58.1H192.1V59.7H187.1ZM204.7 50.4H209.7V62.9H204.7ZM213.5 30.6H218.5V50.3H213.5ZM231.1 42.7H236.1V53.9H231.1ZM266.3 36.0H271.3V63.8H266.3ZM283.9 46.8H288.9V50.7H283.9ZM336.7 67.9H341.7V77.7H336.7ZM363.1 59.1H368.1V72.9H363.1ZM389.5 67.7H394.5V77.0H389.5ZM503.9 177.0H508.9V189.1H503.9ZM512.7 161.3H517.7V176.0H512.7ZM530.3 161.6H535.3V165.1H530.3ZM565.5 168.8H570.5V170.9H565.5ZM574.3 153.9H579.3V168.3H574.3ZM591.9 159.8H596.9V161.9H591.9ZM609.5 173.3H614.5V175.9H609.5ZM618.3 162.5H623.3V172.7H618.3ZM627.1 158.0H632.1V161.9H627.1ZM635.9 149.5H640.9V157.0H635.9ZM662.3 152.6H667.3V167.3H662.3ZM697.5 176.0H702.5V195.3H697.5ZM732.7 174.7H737.7V184.1H732.7ZM750.3 181.9H755.3V185.9H750.3ZM855.9 324.1H860.9V325.8H855.9Z" stroke="#00ff00" stroke-width="1.4" fill="#000"/><path d="M46.3 25.2H51.3V43.5H46.3ZM63.9 41.4H68.9V53.9H63.9ZM72.7 54.9H77.7V63.8H72.7ZM99.1 62.5H104.1V71.5H99.1ZM107.9 72.5H112.9V75.9H107.9ZM195.9 59.4H200.9V62.5H195.9ZM222.3 31.9H227.3V53.9H222.3ZM239.9 42.7H244.9V44.9H239.9ZM248.7 45.9H253.7V62.0H248.7ZM257.5 62.1H262.5V63.8H257.5ZM275.1 36.9H280.1V51.2H275.1ZM292.7 47.3H297.7V51.7H292.7ZM301.5 52.2H306.5V72.8H301.5ZM310.3 73.4H315.3V75.9H310.3ZM327.9 74.7H332.9V77.7H327.9ZM345.5 67.9H350.5V70.5H345.5ZM354.3 70.3H359.3V72.5H354.3ZM371.9 59.1H376.9V68.0H371.9ZM380.7 67.7H385.7V77.0H380.7ZM398.3 68.1H403.3V73.9H398.3ZM407.1 74.9H412.1V79.3H407.1ZM415.9 79.8H420.9V108.1H415.9ZM424.7 108.6H429.7V114.8H424.7ZM433.5 114.9H438.5V121.1H433.5ZM451.1 123.0H456.1V125.6H451.1ZM459.9 126.6H464.9V127.9H459.9ZM468.7 128.4H473.7V141.8H468.7ZM477.5 142.8H482.5V156.2H477.5ZM486.3 156.6H491.3V166.1H486.3ZM495.1 166.7H500.1V190.4H495.1ZM521.5 161.3H526.5V165.2H521.5ZM539.1 162.5H544.1V164.2H539.1ZM547.9 162.9H552.9V166.0H547.9ZM556.7 167.0H561.7V170.5H556.7ZM583.1 153.9H588.1V161.5H583.1ZM600.7 160.7H605.7V175.9H600.7ZM644.7 149.5H649.7V152.9H644.7ZM653.5 153.9H658.5V167.3H653.5ZM671.1 152.6H676.1V171.4H671.1ZM679.9 171.5H684.9V180.4H679.9ZM688.7 181.4H693.7V195.3H688.7ZM723.9 176.1H728.9V184.1H723.9ZM741.5 175.1H746.5V176.9H741.5ZM767.9 180.1H772.9V182.3H767.9ZM785.5 183.3H790.5V186.7H785.5ZM794.3 187.7H799.3V192.6H794.3ZM803.1 193.6H808.1V194.9H803.1ZM811.9 194.5H816.9V199.8H811.9ZM820.7 200.8H825.7V259.7H820.7ZM829.5 260.2H834.5V272.7H829.5ZM838.3 273.3H843.3V288.0H838.3ZM847.1 287.7H852.1V325.8H847.1Z" stroke="#00ff00" stroke-width="1.4" fill="#fff"/><path d="M28.2 59.8H34.2M81.0 65.5H87.0M142.6 65.6H148.6M151.4 65.9H157.4M160.2 66.8H166.2M318.6 75.3H324.6M441.8 121.9H447.8M705.8 174.9H711.8M714.6 174.6H720.6M758.6 179.6H764.6M776.2 183.2H782.2" stroke="#00ff00" stroke-width="1.8" fill="none"/></svg><path d="M4.5 344.5V4.5H877.5V344.5Z" stroke="#c0c0c0" stroke-width="1" fill="none"/><path d="M878 15.1H881" stroke="#c0c0c0"/><text x="883" y="18.7" font-size="10" fill="#fff">1.34330</text><path d="M878 51.1H881" stroke="#c0c0c0"/><text x="883" y="54.7" font-size="10" fill="#fff">1.33960</text><path d="M878 87.5H881" stroke="#c0c0c0"/><text x="883" y="91.1" font-size="10" fill="#fff">1.33590</text><path d="M878 123.4H881" stroke="#c0c0c0"/><text x="883" y="127.0" font-size="10" fill="#fff">1.33220</text><path d="M878 160.0H881" stroke="#c0c0c0"/><text x="883" y="163.6" font-size="10" fill="#fff">1.32850</text><path d="M878 196.4H881" stroke="#c0c0c0"/><text x="883" y="200.0" font-size="10" fill="#fff">1.32470</text><path d="M878 232.4H881" stroke="#c0c0c0"/><text x="883" y="236.0" font-size="10" fill="#fff">1.32100</text><path d="M878 268.9H881" stroke="#c0c0c0"/><text x="883" y="272.5" font-size="10" fill="#fff">1.31730</text><path d="M878 305.3H881" stroke="#c0c0c0"/><text x="883" y="308.9" font-size="10" fill="#fff">1.31360</text><path d="M878 341.4H881" stroke="#c0c0c0"/><text x="883" y="345.0" font-size="10" fill="#fff">1.30990</text><rect x="878.5" y="318.6" width="45" height="12" fill="#fff"/><text x="883" y="328.2" font-size="10" fill="#000">1.31169</text><path d="M4.8 345V348" stroke="#fff"/><text x="3.3" y="357.5" font-size="10" fill="#fff">27 Sep 2024</text><path d="M75.2 345V348" stroke="#fff"/><text x="73.7" y="357.5" font-size="10" fill="#fff">27 Sep 19:00</text><path d="M145.6 345V348" stroke="#fff"/><text x="144.1" y="357.5" font-size="10" fill="#fff">30 Sep 03:00</text><path d="M216.0 345V348" stroke="#fff"/><text x="214.5" y="357.5" font-size="10" fill="#fff">30 Sep 11:00</text><path d="M286.4 345V348" stroke="#fff"/><text x="284.9" y="357.5" font-size="10" fill="#fff">30 Sep 19:00</text><path d="M356.8 345V348" stroke="#fff"/><text x="355.3" y="357.5" font-size="10" fill="#fff">1 Oct 03:00</text><path d="M427.2 345V348" stroke="#fff"/><text x="425.7" y="357.5" font-size="10" fill="#fff">1 Oct 11:00</text><path d="M497.6 345V348" stroke="#fff"/><text x="496.1" y="357.5" font-size="10" fill="#fff">1 Oct 19:00</text><path d="M568.0 345V348" stroke="#fff"/><text x="566.5" y="357.5" font-size="10" fill="#fff">2 Oct 03:00</text><path d="M638.4 345V348" stroke="#fff"/><text x="636.9" y="357.5" font-size="10" fill="#fff">2 Oct 11:00</text><path d="M708.8 345V348" stroke="#fff"/><text x="707.3" y="357.5" font-size="10" fill="#fff">2 Oct 19:00</text><path d="M779.2 345V348" stroke="#fff"/><text x="777.7" y="357.5" font-size="10" fill="#fff">3 Oct 03:00</text><path d="M849.6 345V348" stroke="#fff"/><text x="848.1" y="357.5" font-size="10" fill="#fff">3 Oct 11:00</text><path d="M7 9h7l-3.5 4z" fill="#fff"/><text x="21" y="16" font-size="10" fill="#fff">GBPUSD,H1</text><text x="87.2" y="16" font-size="10" fill="#fff">1.31151 1.31275 1.31090 1.31169</text></svg>
<div class="a" style="left:12px;top:550px;width:948px;height:413px;background:#d7e4f2;border:1px solid #5c5c5c;border-radius:5px 5px 0 0;overflow:hidden">
<div class="a" style="left:0;top:0;width:946px;height:1px;background:#fff"></div>
<div class="a" style="left:0;top:1px;width:946px;height:33px;background:linear-gradient(#c3d1e0,#d8e5f2)"></div>
<div class="a" style="left:0;top:1px;width:1px;height:413px;background:#fff"></div>
<svg class="a" style="left:11px;top:12px" width="17" height="17" viewBox="0 0 17 17"><rect x="0.6" y="1" width="13" height="10" fill="#fff" stroke="#4a8ee8" stroke-width="1.1"/><rect x="0.6" y="1" width="13" height="1.8" fill="#4a8ee8"/><path d="M3 8V5.5l2 1.5 2-3 2 2.5 2-1" stroke="#6aa4ec" fill="none" stroke-width="1"/><rect x="4.6" y="7.3" width="11.5" height="9.2" fill="#fff" stroke="#4a8ee8" stroke-width="1.1" stroke-dasharray="1.4 .5"/><path d="M6.5 10.5l2 3 1.5-3 1.5 3 1.2-1.8 1 1" stroke="#3a80e0" fill="none" stroke-width="1"/></svg>
<div class="a" style="left:32px;top:14px;font-size:12px;color:#a0a0a0;white-space:nowrap">EURUSD,H1</div>
<div class="a" style="left:826px;top:10px;width:34px;height:20px;border:1px solid #a8b4c4;border-radius:3px;background:linear-gradient(#dfe8f2,#d4e0ec)">
<div class="a" style="left:11px;top:9px;width:11px;height:4px;background:#fff;border:1px solid #555;border-radius:1px"></div>
</div>
<div class="a" style="left:864px;top:10px;width:34px;height:20px;border:1px solid #a8b4c4;border-radius:3px;background:linear-gradient(#dfe8f2,#d4e0ec)">
<div class="a" style="left:11px;top:3px;width:11px;height:10px;background:#fff;border:1px solid #555;border-radius:1px"><div class="a" style="left:2px;top:3px;width:5px;height:2px;background:#8ba0b8"></div></div>
</div>
<div class="a" style="left:901px;top:10px;width:34px;height:20px;border:1px solid #a8b4c4;border-radius:3px;background:linear-gradient(#dfe8f2,#d4e0ec)">
<svg class="a" style="left:10px;top:2px" width="14" height="14" viewBox="0 0 14 14"><path d="M3.2 4.2l7.6 5.6M10.8 4.2l-7.6 5.6" stroke="#555" stroke-width="3.9" stroke-linecap="round"/><path d="M3.2 4.2l7.6 5.6M10.8 4.2l-7.6 5.6" stroke="#fff" stroke-width="2.1" stroke-linecap="round"/></svg>
</div>
</div>
<svg class="a" style="left:21px;top:585px" width="929" height="369" viewBox="-1 -1 929 369"><rect x="-1" y="-1" width="929" height="369" fill="#fff"/><rect x="-1" y="-1" width="928" height="368" fill="#a0a0a0"/><rect x="0" y="0" width="927" height="367" fill="#000"/><path d="M5 14.6H877M5 50.7H877M5 86.7H877M5 123.1H877M5 159.1H877M5 195.6H877M5 232.0H877M5 268.0H877M5 304.5H877M5 340.9H877M40.0 5V344M75.2 5V344M110.4 5V344M145.6 5V344M180.8 5V344M216.0 5V344M251.2 5V344M286.4 5V344M321.6 5V344M356.8 5V344M392.0 5V344M427.2 5V344M462.4 5V344M497.6 5V344M532.8 5V344M568.0 5V344M603.2 5V344M638.4 5V344M673.6 5V344M708.8 5V344M744.0 5V344M779.2 5V344M814.4 5V344M849.6 5V344" stroke="#778899" stroke-width="1.1" stroke-dasharray="3.3 3.3" fill="none"/><path d="M4 314.5H877" stroke="#778899" stroke-width="1.1"/><svg x="4.5" y="4.5" width="872" height="339" viewBox="4.5 4.5 872 339" overflow="hidden"><path d="M4.8 130.6V163.0M13.6 105.0V144.6M22.4 86.5V113.5M31.2 91.9V107.2M40.0 33.4V117.6M48.8 31.2V71.6M57.6 50.5V89.2M66.4 73.4V115.8M75.2 105.4V129.7M84.0 95.5V122.5M92.8 91.9V105.4M101.6 91.9V100.4M110.4 91.9V110.8M119.2 102.2V115.8M128.0 84.2V108.1M136.8 85.6V92.8M145.6 81.1V91.9M154.4 82.9V104.5M163.2 100.9V111.7M172.0 101.8V112.6M180.8 101.8V108.5M189.6 88.2V103.6M198.4 90.5V112.6M207.2 78.8V107.2M216.0 21.6V84.6M224.8 27.0V57.6M233.6 52.2V66.6M242.4 31.1V56.8M251.2 35.2V60.8M260.0 50.9V93.6M268.8 90.0V137.8M277.6 97.2V148.6M286.4 122.0V140.0M295.2 100.8V125.2M304.0 113.9V184.6M312.8 146.3V170.6M321.6 145.0V157.6M330.4 146.3V161.9M339.2 135.5V148.6M348.0 135.5V146.3M356.8 144.5V162.5M365.6 133.7V154.4M374.4 133.7V146.8M383.2 139.1V147.6M392.0 137.3V149.0M400.8 132.4V146.8M409.6 137.3V155.8M418.4 143.6V188.6M427.2 172.4V211.6M436.0 182.3V221.4M444.8 211.1V235.7M453.6 207.5V244.4M462.4 226.4V258.8M471.2 236.3V278.6M480.0 229.1V280.4M488.8 245.3V275.9M497.6 255.2V296.2M506.4 266.9V300.6M515.2 254.8V271.8M524.0 245.8V265.1M532.8 253.4V267.4M541.6 254.3V277.7M550.4 257.0V264.2M559.2 262.4V269.2M568.0 254.3V269.2M576.8 251.2V266.9M585.6 252.0V269.6M594.4 255.6V268.7M603.2 251.6V275.9M612.0 269.2V286.2M620.8 257.9V276.4M629.6 253.4V269.6M638.4 235.8V269.2M647.2 253.8V274.1M656.0 247.1V265.1M664.8 247.6V267.4M673.6 246.2V292.1M682.4 265.6V298.4M691.2 281.3V318.2M700.0 291.2V322.7M708.8 283.1V303.8M717.6 292.1V302.0M726.4 294.4V314.2M735.2 286.7V314.6M744.0 287.2V302.9M752.8 295.7V308.3M761.6 293.0V300.6M770.4 295.2V303.8M779.2 298.0V314.6M788.0 307.4V318.2M796.8 309.6V318.2M805.6 313.7V323.9M814.4 316.0V323.6M823.2 317.3V335.8M832.0 305.2V332.6M840.8 309.2V331.7M849.6 298.5V328.5M858.4 297.2V319.2" stroke="#00ff00" stroke-width="1.3" fill="none"/><path d="M2.3 131.5H7.3V151.3H2.3ZM11.1 106.8H16.1V131.5H11.1ZM19.9 100.1H24.9V105.8H19.9ZM37.5 37.9H42.5V100.9H37.5ZM81.5 98.7H86.5V119.7H81.5ZM90.3 92.9H95.3V98.6H90.3ZM116.7 106.8H121.7V114.8H116.7ZM125.5 86.5H130.5V106.7H125.5ZM143.1 87.0H148.1V90.5H143.1ZM178.3 102.7H183.3V107.1H178.3ZM187.1 95.1H192.1V102.1H187.1ZM195.9 91.5H200.9V94.1H195.9ZM204.7 85.1H209.7V90.9H204.7ZM213.5 27.5H218.5V84.1H213.5ZM239.9 41.1H244.9V53.1H239.9ZM283.9 125.7H288.9V131.4H283.9ZM292.7 118.0H297.7V124.7H292.7ZM319.1 148.6H324.1V151.2H319.1ZM336.7 136.9H341.7V147.0H336.7ZM363.1 134.7H368.1V152.1H363.1ZM389.5 138.7H394.5V142.2H389.5ZM477.5 248.1H482.5V254.7H477.5ZM503.9 271.5H508.9V284.4H503.9ZM512.7 256.1H517.7V271.3H512.7ZM539.1 262.0H544.1V263.7H539.1ZM574.3 255.3H579.3V265.9H574.3ZM591.9 257.5H596.9V264.6H591.9ZM618.3 265.1H623.3V270.9H618.3ZM635.9 253.9H640.9V263.3H635.9ZM662.3 248.5H667.3V263.3H662.3ZM697.5 293.5H702.5V315.0H697.5ZM732.7 294.9H737.7V312.3H732.7ZM750.3 296.7H755.3V307.3H750.3ZM829.5 313.7H834.5V327.6H829.5ZM847.1 314.0H852.1V321.0H847.1Z" stroke="#00ff00" stroke-width="1.4" fill="#000"/><path d="M46.3 38.9H51.3V62.1H46.3ZM55.1 63.1H60.1V72.9H55.1ZM63.9 73.9H68.9V107.6H63.9ZM72.7 108.1H77.7V118.9H72.7ZM99.1 92.9H104.1V98.1H99.1ZM134.3 87.5H139.3V90.1H134.3ZM151.9 87.5H156.9V103.5H151.9ZM169.5 105.0H174.5V108.1H169.5ZM222.3 28.0H227.3V54.5H222.3ZM248.7 41.1H253.7V54.0H248.7ZM257.5 55.5H262.5V89.5H257.5ZM266.3 91.5H271.3V108.0H266.3ZM275.1 109.0H280.1V131.4H275.1ZM301.5 118.0H306.5V152.1H301.5ZM345.5 136.9H350.5V144.5H345.5ZM354.3 145.5H359.3V152.1H354.3ZM371.9 134.7H376.9V139.9H371.9ZM398.3 139.1H403.3V142.2H398.3ZM407.1 144.5H412.1V147.6H407.1ZM415.9 148.6H420.9V181.8H415.9ZM424.7 181.9H429.7V201.6H424.7ZM433.5 202.6H438.5V215.1H433.5ZM442.3 215.7H447.3V229.1H442.3ZM451.1 230.1H456.1V232.7H451.1ZM459.9 234.4H464.9V256.1H459.9ZM486.3 247.6H491.3V264.0H486.3ZM495.1 265.6H500.1V283.9H495.1ZM521.5 255.3H526.5V261.9H521.5ZM547.9 261.1H552.9V263.3H547.9ZM556.7 264.3H561.7V266.4H556.7ZM583.1 255.3H588.1V264.1H583.1ZM600.7 257.9H605.7V269.5H600.7ZM653.5 256.6H658.5V263.3H653.5ZM671.1 248.5H676.1V286.7H671.1ZM679.9 287.2H684.9V289.8H679.9ZM688.7 290.8H693.7V315.0H688.7ZM706.3 293.5H711.3V297.5H706.3ZM723.9 298.0H728.9V312.3H723.9ZM741.5 294.9H746.5V301.1H741.5ZM759.1 297.1H764.1V298.8H759.1ZM776.7 298.9H781.7V310.9H776.7ZM794.3 311.5H799.3V315.9H794.3ZM811.9 316.9H816.9V320.4H811.9ZM820.7 321.4H825.7V327.6H820.7ZM838.3 314.2H843.3V320.4H838.3Z" stroke="#00ff00" stroke-width="1.4" fill="#fff"/><path d="M28.2 100.4H34.2M107.4 99.5H113.4M160.2 104.9H166.2M230.6 54.5H236.6M309.8 152.1H315.8M327.4 147.6H333.4M380.2 141.8H386.2M468.2 256.7H474.2M529.8 262.1H535.8M565.0 266.9H571.0M609.0 270.9H615.0M626.6 263.9H632.6M644.2 255.5H650.2M714.6 297.5H720.6M767.4 299.7H773.4M785.0 311.4H791.0M802.6 316.8H808.6M855.4 314.0H861.4" stroke="#00ff00" stroke-width="1.8" fill="none"/></svg><path d="M4.5 344.5V4.5H877.5V344.5Z" stroke="#c0c0c0" stroke-width="1" fill="none"/><path d="M878 14.6H881" stroke="#c0c0c0"/><text x="883" y="18.2" font-size="10" fill="#fff">1.12125</text><path d="M878 50.7H881" stroke="#c0c0c0"/><text x="883" y="54.3" font-size="10" fill="#fff">1.11910</text><path d="M878 86.7H881" stroke="#c0c0c0"/><text x="883" y="90.3" font-size="10" fill="#fff">1.11700</text><path d="M878 123.1H881" stroke="#c0c0c0"/><text x="883" y="126.7" font-size="10" fill="#fff">1.11485</text><path d="M878 159.1H881" stroke="#c0c0c0"/><text x="883" y="162.7" font-size="10" fill="#fff">1.11270</text><path d="M878 195.6H881" stroke="#c0c0c0"/><text x="883" y="199.2" font-size="10" fill="#fff">1.11060</text><path d="M878 232.0H881" stroke="#c0c0c0"/><text x="883" y="235.6" font-size="10" fill="#fff">1.10845</text><path d="M878 268.0H881" stroke="#c0c0c0"/><text x="883" y="271.6" font-size="10" fill="#fff">1.10630</text><path d="M878 304.5H881" stroke="#c0c0c0"/><text x="883" y="308.1" font-size="10" fill="#fff">1.10420</text><path d="M878 340.9H881" stroke="#c0c0c0"/><text x="883" y="344.5" font-size="10" fill="#fff">1.10205</text><rect x="878.5" y="308.5" width="45" height="12" fill="#fff"/><text x="883" y="318.1" font-size="10" fill="#000">1.10360</text><path d="M4.8 345V348" stroke="#fff"/><text x="3.3" y="357.5" font-size="10" fill="#fff">27 Sep 2024</text><path d="M75.2 345V348" stroke="#fff"/><text x="73.7" y="357.5" font-size="10" fill="#fff">27 Sep 19:00</text><path d="M145.6 345V348" stroke="#fff"/><text x="144.1" y="357.5" font-size="10" fill="#fff">30 Sep 03:00</text><path d="M216.0 345V348" stroke="#fff"/><text x="214.5" y="357.5" font-size="10" fill="#fff">30 Sep 11:00</text><path d="M286.4 345V348" stroke="#fff"/><text x="284.9" y="357.5" font-size="10" fill="#fff">30 Sep 19:00</text><path d="M356.8 345V348" stroke="#fff"/><text x="355.3" y="357.5" font-size="10" fill="#fff">1 Oct 03:00</text><path d="M427.2 345V348" stroke="#fff"/><text x="425.7" y="357.5" font-size="10" fill="#fff">1 Oct 11:00</text><path d="M497.6 345V348" stroke="#fff"/><text x="496.1" y="357.5" font-size="10" fill="#fff">1 Oct 19:00</text><path d="M568.0 345V348" stroke="#fff"/><text x="566.5" y="357.5" font-size="10" fill="#fff">2 Oct 03:00</text><path d="M638.4 345V348" stroke="#fff"/><text x="636.9" y="357.5" font-size="10" fill="#fff">2 Oct 11:00</text><path d="M708.8 345V348" stroke="#fff"/><text x="707.3" y="357.5" font-size="10" fill="#fff">2 Oct 19:00</text><path d="M779.2 345V348" stroke="#fff"/><text x="777.7" y="357.5" font-size="10" fill="#fff">3 Oct 03:00</text><path d="M849.6 345V348" stroke="#fff"/><text x="848.1" y="357.5" font-size="10" fill="#fff">3 Oct 11:00</text><path d="M7 9h7l-3.5 4z" fill="#fff"/><text x="21" y="16" font-size="10" fill="#fff">EURUSD,H1</text><text x="87.6" y="16" font-size="10" fill="#fff">1.10365 1.10456 1.10337 1.10360</text></svg>
<div class="a" style="left:960px;top:550px;width:948px;height:413px;background:#d7e4f2;border:1px solid #5c5c5c;border-radius:5px 5px 0 0;overflow:hidden">
<div class="a" style="left:0;top:0;width:946px;height:1px;background:#fff"></div>
<div class="a" style="left:0;top:1px;width:946px;height:33px;background:linear-gradient(#c3d1e0,#d8e5f2)"></div>
<div class="a" style="left:0;top:1px;width:1px;height:413px;background:#fff"></div>
<svg class="a" style="left:11px;top:12px" width="17" height="17" viewBox="0 0 17 17"><rect x="0.6" y="1" width="13" height="10" fill="#fff" stroke="#4a8ee8" stroke-width="1.1"/><rect x="0.6" y="1" width="13" height="1.8" fill="#4a8ee8"/><path d="M3 8V5.5l2 1.5 2-3 2 2.5 2-1" stroke="#6aa4ec" fill="none" stroke-width="1"/><rect x="4.6" y="7.3" width="11.5" height="9.2" fill="#fff" stroke="#4a8ee8" stroke-width="1.1" stroke-dasharray="1.4 .5"/><path d="M6.5 10.5l2 3 1.5-3 1.5 3 1.2-1.8 1 1" stroke="#3a80e0" fill="none" stroke-width="1"/></svg>
<div class="a" style="left:32px;top:14px;font-size:12px;color:#a0a0a0;white-space:nowrap">AUDUSD,H1</div>
<div class="a" style="left:826px;top:10px;width:34px;height:20px;border:1px solid #a8b4c4;border-radius:3px;background:linear-gradient(#dfe8f2,#d4e0ec)">
<div class="a" style="left:11px;top:9px;width:11px;height:4px;background:#fff;border:1px solid #555;border-radius:1px"></div>
</div>
<div class="a" style="left:864px;top:10px;width:34px;height:20px;border:1px solid #a8b4c4;border-radius:3px;background:linear-gradient(#dfe8f2,#d4e0ec)">
<div class="a" style="left:11px;top:3px;width:11px;height:10px;background:#fff;border:1px solid #555;border-radius:1px"><div class="a" style="left:2px;top:3px;width:5px;height:2px;background:#8ba0b8"></div></div>
</div>
<div class="a" style="left:901px;top:10px;width:34px;height:20px;border:1px solid #a8b4c4;border-radius:3px;background:linear-gradient(#dfe8f2,#d4e0ec)">
<svg class="a" style="left:10px;top:2px" width="14" height="14" viewBox="0 0 14 14"><path d="M3.2 4.2l7.6 5.6M10.8 4.2l-7.6 5.6" stroke="#555" stroke-width="3.9" stroke-linecap="round"/><path d="M3.2 4.2l7.6 5.6M10.8 4.2l-7.6 5.6" stroke="#fff" stroke-width="2.1" stroke-linecap="round"/></svg>
</div>
</div>
<svg class="a" style="left:969px;top:585px" width="929" height="369" viewBox="-1 -1 929 369"><rect x="-1" y="-1" width="929" height="369" fill="#fff"/><rect x="-1" y="-1" width="928" height="368" fill="#a0a0a0"/><rect x="0" y="0" width="927" height="367" fill="#000"/><path d="M5 7.5H877M5 44.0H877M5 81.7H877M5 118.5H877M5 156.0H877M5 193.3H877M5 231.2H877M5 268.0H877M5 304.5H877M5 341.0H877M40.0 5V344M75.2 5V344M110.4 5V344M145.6 5V344M180.8 5V344M216.0 5V344M251.2 5V344M286.4 5V344M321.6 5V344M356.8 5V344M392.0 5V344M427.2 5V344M462.4 5V344M497.6 5V344M532.8 5V344M568.0 5V344M603.2 5V344M638.4 5V344M673.6 5V344M708.8 5V344M744.0 5V344M779.2 5V344M814.4 5V344M849.6 5V344" stroke="#778899" stroke-width="1.1" stroke-dasharray="3.3 3.3" fill="none"/><path d="M4 326.5H877" stroke="#778899" stroke-width="1.1"/><svg x="4.5" y="4.5" width="872" height="339" viewBox="4.5 4.5 872 339" overflow="hidden"><path d="M4.8 188.9V225.2M13.6 186.7V217.5M22.4 176.8V216.0M31.2 165.8V215.3M40.0 61.3V180.1M48.8 63.5V97.6M57.6 37.1V87.7M66.4 56.9V127.3M75.2 114.1V154.8M84.0 124.0V157.0M92.8 115.2V161.4M101.6 117.0V142.7M110.4 140.5V157.0M119.2 144.9V174.6M128.0 96.5V148.7M136.8 92.1V114.8M145.6 78.9V104.2M154.4 38.2V104.2M163.2 82.2V113.0M172.0 60.2V92.1M180.8 43.3V70.3M189.6 23.5V62.2M198.4 37.9V78.4M207.2 36.1V60.4M216.0 49.6V92.8M224.8 65.4V87.0M233.6 77.5V108.1M242.4 71.2V110.4M251.2 63.1V98.2M260.0 28.0V76.2M268.8 22.2V92.8M277.6 27.1V73.9M286.4 30.2V60.8M295.2 21.7V47.8M304.0 37.9V163.0M312.8 97.3V142.3M321.6 106.3V124.8M330.4 104.0V151.3M339.2 94.2V114.0M348.0 91.9V114.0M356.8 106.7V133.7M365.6 46.0V122.4M374.4 48.2V97.2M383.2 75.2V114.4M392.0 61.2V113.9M400.8 50.0V77.4M409.6 59.9V88.2M418.4 59.0V152.9M427.2 118.0V163.4M436.0 108.0V149.9M444.8 124.2V176.3M453.6 127.0V165.2M462.4 111.2V144.5M471.2 115.2V194.0M480.0 152.3V232.0M488.8 193.6V253.1M497.6 201.3V270.4M506.4 208.0V300.4M515.2 167.7V209.2M524.0 162.4V204.4M532.8 199.2V218.1M541.6 206.4V223.5M550.4 210.9V228.0M559.2 207.3V230.1M568.0 201.0V228.9M576.8 138.0V215.7M585.6 127.2V155.6M594.4 107.0V141.2M603.2 128.6V203.7M612.0 176.7V238.8M620.8 174.4V237.9M629.6 157.8V185.2M638.4 142.5V185.7M647.2 166.8V192.9M656.0 147.0V183.9M664.8 149.2V174.0M673.6 148.4V183.9M682.4 156.0V230.1M691.2 176.7V230.1M700.0 173.1V227.1M708.8 161.6V212.0M717.6 194.3V225.8M726.4 192.4V225.8M735.2 194.9V226.6M744.0 198.7V211.0M752.8 207.2V218.2M761.6 203.8V215.8M770.4 194.9V216.7M779.2 203.0V245.6M788.0 212.0V280.9M796.8 238.0V279.8M805.6 249.0V287.4M814.4 264.6V289.9M823.2 269.9V304.5M832.0 235.7V282.8M840.8 244.8V289.3M849.6 274.7V326.0M858.4 310.8V335.5" stroke="#00ff00" stroke-width="1.3" fill="none"/><path d="M2.3 203.7H7.3V217.0H2.3ZM11.1 199.3H16.1V202.7H11.1ZM28.7 177.3H33.7V214.8H28.7ZM37.5 78.7H42.5V176.8H37.5ZM55.1 57.4H60.1V82.8H55.1ZM90.3 116.8H95.3V132.8H90.3ZM116.7 148.7H121.7V149.9H116.7ZM125.5 110.2H130.5V147.7H125.5ZM134.3 98.1H139.3V109.2H134.3ZM143.1 86.0H148.1V97.1H143.1ZM169.5 64.0H174.5V85.0H169.5ZM178.3 55.1H183.3V63.1H178.3ZM195.9 49.7H200.9V57.7H195.9ZM239.9 83.9H244.9V104.0H239.9ZM248.7 67.2H253.7V82.4H248.7ZM257.5 51.0H262.5V67.1H257.5ZM266.3 38.9H271.3V51.3H266.3ZM283.9 31.7H288.9V54.5H283.9ZM327.9 117.1H332.9V150.8H327.9ZM336.7 104.5H341.7V112.5H336.7ZM363.1 50.9H368.1V116.1H363.1ZM389.5 63.5H394.5V110.7H389.5ZM433.5 127.9H438.5V133.7H433.5ZM451.1 133.3H456.1V154.2H451.1ZM459.9 130.1H464.9V132.7H459.9ZM503.9 209.0H508.9V247.1H503.9ZM512.7 182.6H517.7V208.7H512.7ZM565.5 215.9H570.5V225.3H565.5ZM574.3 148.9H579.3V215.2H574.3ZM583.1 129.9H588.1V147.9H583.1ZM618.3 182.6H623.3V226.0H618.3ZM627.1 171.8H632.1V182.1H627.1ZM653.5 156.5H658.5V173.1H653.5ZM697.5 175.9H702.5V221.2H697.5ZM715.1 199.2H720.1V209.6H715.1ZM732.7 200.1H737.7V220.4H732.7ZM750.3 213.8H755.3V217.2H750.3ZM820.7 280.3H825.7V288.8H820.7ZM829.5 251.0H834.5V278.9H829.5Z" stroke="#00ff00" stroke-width="1.4" fill="#000"/><path d="M19.9 199.8H24.9V215.5H19.9ZM46.3 78.7H51.3V81.7H46.3ZM63.9 58.1H68.9V122.4H63.9ZM72.7 123.4H77.7V126.8H72.7ZM81.5 127.8H86.5V132.3H81.5ZM99.1 117.9H104.1V138.9H99.1ZM107.9 141.7H112.9V154.3H107.9ZM187.1 55.5H192.1V57.7H187.1ZM204.7 48.7H209.7V59.0H204.7ZM213.5 60.0H218.5V72.9H213.5ZM222.3 73.9H227.3V85.5H222.3ZM231.1 86.1H236.1V104.0H231.1ZM275.1 38.9H280.1V55.9H275.1ZM292.7 32.1H297.7V41.5H292.7ZM301.5 43.3H306.5V97.3H301.5ZM310.3 98.3H315.3V112.1H310.3ZM319.1 111.3H324.1V114.8H319.1ZM345.5 103.7H350.5V108.1H345.5ZM354.3 109.0H359.3V117.0H354.3ZM371.9 50.9H376.9V78.7H371.9ZM380.7 79.7H385.7V110.7H380.7ZM398.3 63.1H403.3V66.6H398.3ZM407.1 67.6H412.1V71.1H407.1ZM415.9 70.7H420.9V135.0H415.9ZM442.3 127.9H447.3V154.2H442.3ZM468.7 130.1H473.7V186.3H468.7ZM477.5 188.8H482.5V195.0H477.5ZM486.3 196.0H491.3V204.6H486.3ZM495.1 206.1H500.1V247.1H495.1ZM521.5 182.6H526.5V202.7H521.5ZM530.3 203.7H535.3V212.7H530.3ZM556.7 216.8H561.7V225.3H556.7ZM591.9 129.9H596.9V137.9H591.9ZM600.7 138.9H605.7V190.1H600.7ZM609.5 191.6H614.5V227.1H609.5ZM635.9 171.8H640.9V175.7H635.9ZM662.3 155.1H667.3V164.5H662.3ZM671.1 165.1H676.1V177.5H671.1ZM679.9 177.2H684.9V206.3H679.9ZM688.7 207.8H693.7V221.7H688.7ZM706.3 176.4H711.3V209.6H706.3ZM723.9 200.1H728.9V220.4H723.9ZM741.5 200.1H746.5V207.1H741.5ZM776.7 210.0H781.7V222.3H776.7ZM785.5 223.3H790.5V246.6H785.5ZM794.3 247.6H799.3V260.9H794.3ZM803.1 261.9H808.1V273.2H803.1ZM811.9 273.8H816.9V288.8H811.9ZM838.3 251.0H843.3V275.1H838.3ZM847.1 276.1H852.1V319.2H847.1ZM855.9 320.2H860.9V325.5H855.9Z" stroke="#00ff00" stroke-width="1.4" fill="#fff"/><path d="M151.4 86.1H157.4M160.2 86.1H166.2M424.2 134.1H430.2M538.6 216.5H544.6M547.4 216.9H553.4M644.2 175.5H650.2M758.6 210.1H764.6M767.4 209.7H773.4" stroke="#00ff00" stroke-width="1.8" fill="none"/></svg><path d="M4.5 344.5V4.5H877.5V344.5Z" stroke="#c0c0c0" stroke-width="1" fill="none"/><path d="M878 7.5H881" stroke="#c0c0c0"/><text x="883" y="11.1" font-size="10" fill="#fff">0.69450</text><path d="M878 44.0H881" stroke="#c0c0c0"/><text x="883" y="47.6" font-size="10" fill="#fff">0.69340</text><path d="M878 81.7H881" stroke="#c0c0c0"/><text x="883" y="85.3" font-size="10" fill="#fff">0.69225</text><path d="M878 118.5H881" stroke="#c0c0c0"/><text x="883" y="122.1" font-size="10" fill="#fff">0.69110</text><path d="M878 156.0H881" stroke="#c0c0c0"/><text x="883" y="159.6" font-size="10" fill="#fff">0.68995</text><path d="M878 193.3H881" stroke="#c0c0c0"/><text x="883" y="196.9" font-size="10" fill="#fff">0.68880</text><path d="M878 231.2H881" stroke="#c0c0c0"/><text x="883" y="234.8" font-size="10" fill="#fff">0.68765</text><path d="M878 268.0H881" stroke="#c0c0c0"/><text x="883" y="271.6" font-size="10" fill="#fff">0.68650</text><path d="M878 304.5H881" stroke="#c0c0c0"/><text x="883" y="308.1" font-size="10" fill="#fff">0.68540</text><path d="M878 341.0H881" stroke="#c0c0c0"/><text x="883" y="344.6" font-size="10" fill="#fff">0.68430</text><rect x="878.5" y="320.5" width="45" height="12" fill="#fff"/><text x="883" y="330.1" font-size="10" fill="#000">0.68472</text><path d="M4.8 345V348" stroke="#fff"/><text x="3.3" y="357.5" font-size="10" fill="#fff">27 Sep 2024</text><path d="M75.2 345V348" stroke="#fff"/><text x="73.7" y="357.5" font-size="10" fill="#fff">27 Sep 19:00</text><path d="M145.6 345V348" stroke="#fff"/><text x="144.1" y="357.5" font-size="10" fill="#fff">30 Sep 03:00</text><path d="M216.0 345V348" stroke="#fff"/><text x="214.5" y="357.5" font-size="10" fill="#fff">30 Sep 11:00</text><path d="M286.4 345V348" stroke="#fff"/><text x="284.9" y="357.5" font-size="10" fill="#fff">30 Sep 19:00</text><path d="M356.8 345V348" stroke="#fff"/><text x="355.3" y="357.5" font-size="10" fill="#fff">1 Oct 03:00</text><path d="M427.2 345V348" stroke="#fff"/><text x="425.7" y="357.5" font-size="10" fill="#fff">1 Oct 11:00</text><path d="M497.6 345V348" stroke="#fff"/><text x="496.1" y="357.5" font-size="10" fill="#fff">1 Oct 19:00</text><path d="M568.0 345V348" stroke="#fff"/><text x="566.5" y="357.5" font-size="10" fill="#fff">2 Oct 03:00</text><path d="M638.4 345V348" stroke="#fff"/><text x="636.9" y="357.5" font-size="10" fill="#fff">2 Oct 11:00</text><path d="M708.8 345V348" stroke="#fff"/><text x="707.3" y="357.5" font-size="10" fill="#fff">2 Oct 19:00</text><path d="M779.2 345V348" stroke="#fff"/><text x="777.7" y="357.5" font-size="10" fill="#fff">3 Oct 03:00</text><path d="M849.6 345V348" stroke="#fff"/><text x="848.1" y="357.5" font-size="10" fill="#fff">3 Oct 11:00</text><path d="M7 9h7l-3.5 4z" fill="#fff"/><text x="21" y="16" font-size="10" fill="#fff">AUDUSD,H1</text><text x="87.2" y="16" font-size="10" fill="#fff">0.68494 0.68521 0.68445 0.68472</text></svg>
<div class="a" style="left:12px;top:963px;width:1896px;height:25px;background:#f0f0f0"></div>
<div class="a" style="left:12px;top:963px;width:1896px;height:1px;background:#a0a0a0"></div>
<div class="a" style="left:12px;top:966px;width:1896px;height:1px;background:#1a1a1a"></div>
<div class="a" style="left:17px;top:966px;width:88px;height:21px;background:#fff;border:1px solid #1a1a1a;border-top:none"></div>
<div class="a" style="left:29px;top:969px;font-size:12px;color:#1e1e1e">USDJPY,H1</div>
<div class="a" style="left:117px;top:969px;font-size:12px;color:#8a8a8a">EURUSD,H1</div>
<div class="a" style="left:209px;top:969px;font-size:12px;color:#8a8a8a">GBPUSD,H1</div>
<div class="a" style="left:302px;top:969px;font-size:12px;color:#8a8a8a">AUDUSD,H1</div>
<div class="a" style="left:197px;top:970px;width:1px;height:14px;background:#333"></div>
<div class="a" style="left:289px;top:970px;width:1px;height:14px;background:#333"></div>
<div class="a" style="left:385px;top:970px;width:1px;height:14px;background:#333"></div>
<svg class="a" style="left:1870px;top:970px" width="30" height="14"><path d="M8 3v8l-4-4z" fill="#999"/><path d="M26 3v8l4-4z" fill="#999"/></svg>
</body></html>
